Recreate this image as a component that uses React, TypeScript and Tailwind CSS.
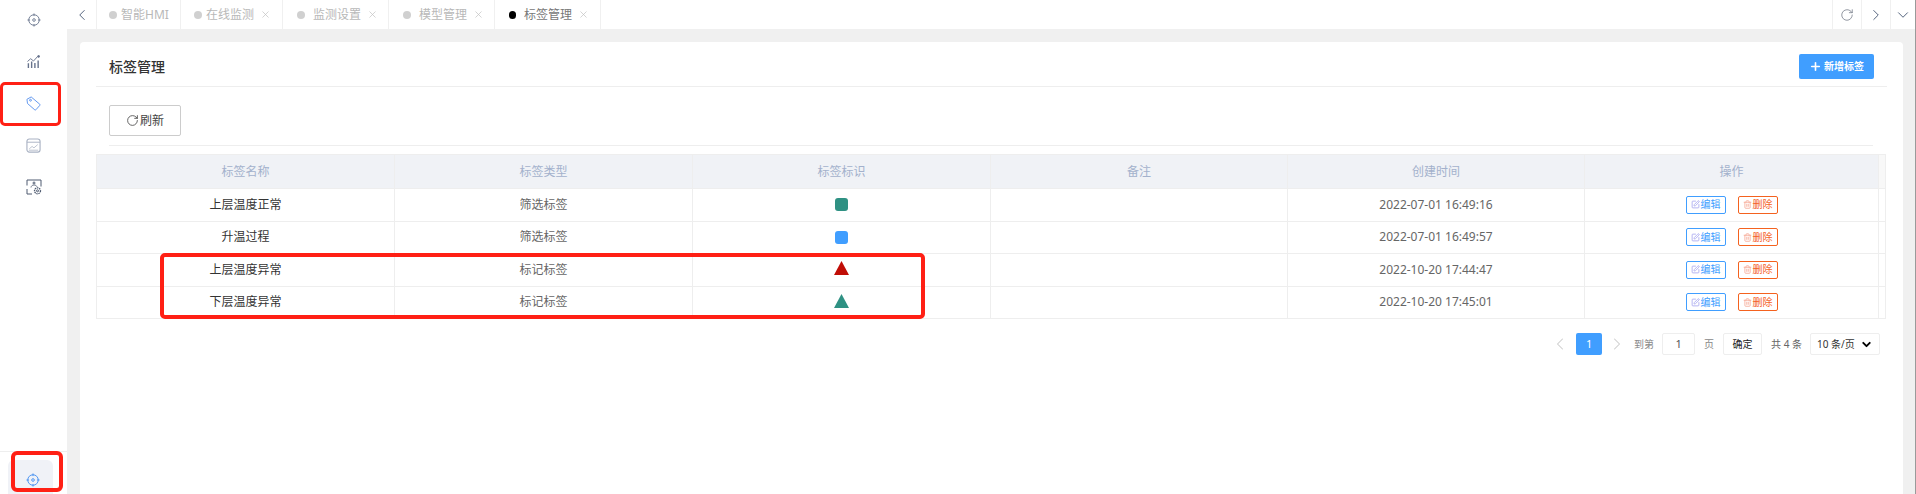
import { ChevronDown, ChevronLeft, ChevronRight, Plus, RotateCw, SquarePen, Trash2, X } from "lucide-react";

type Row = {
  name: string;
  kind: string;
  mark: "square" | "triangle";
  color: string;
  created: string;
};

const rows: Row[] = [
  { name: "上层温度正常", kind: "筛选标签", mark: "square", color: "bg-[#2f9183]", created: "2022-07-01 16:49:16" },
  { name: "升温过程", kind: "筛选标签", mark: "square", color: "bg-[#409eff]", created: "2022-07-01 16:49:57" },
  { name: "上层温度异常", kind: "标记标签", mark: "triangle", color: "#c00d06", created: "2022-10-20 17:44:47" },
  { name: "下层温度异常", kind: "标记标签", mark: "triangle", color: "#2f9183", created: "2022-10-20 17:45:01" },
];

const tabs = [
  { label: "智能HMI", box: "w-[84px] pl-[12px]", dot: "mr-[4px]", closable: false },
  { label: "在线监测", box: "w-[102px] pl-[13px]", dot: "mr-[4px]", closable: true },
  { label: "监测设置", box: "w-[106px] pl-[14px]", dot: "mr-[8px]", closable: true },
  { label: "模型管理", box: "w-[106px] pl-[14px]", dot: "mr-[8px]", closable: true },
];

function TargetIcon({ className }: { className: string }) {
  return (
    <svg viewBox="0 0 16 16" className={className} fill="none" stroke="currentColor" strokeWidth="1">
      <circle cx="8" cy="8" r="6" />
      <circle cx="8" cy="8" r="1.5" />
      <path d="M8 0.500v3M8 12.500v3M0.500 8h3M12.500 8h3" />
    </svg>
  );
}

function ChartIcon() {
  return (
    <svg viewBox="0 0 14 14" className="h-[13px] w-[13px] text-[#67738c]" fill="none" stroke="currentColor" strokeWidth="1">
      <path d="M0.500 7l3.500-3 3 2.500 4.500-5" />
      <circle cx="12.500" cy="1.500" r="1" fill="currentColor" />
      <path d="M1.500 14V9M5 14V7M8.500 14V8.500M12 14V6" strokeWidth="1.500" />
    </svg>
  );
}

function TagIcon() {
  return (
    <svg viewBox="0 0 16 16" className="h-[15px] w-[15px] text-[#5b93ee]" fill="none" stroke="currentColor" strokeWidth="1">
      <path d="M1 3.500L5.500 1l9.200 7.800a.8.8 0 0 1 .1 1.100l-4.300 4.800a.8.8 0 0 1-1.100.1L1.600 8z" />
      <circle cx="4.800" cy="4.500" r="1" />
    </svg>
  );
}

function PanelChartIcon() {
  return (
    <svg viewBox="0 0 16 16" className="h-[15px] w-[15px] text-[#a9b2c3]" fill="none" stroke="currentColor" strokeWidth="1.200">
      <rect x="1" y="1" width="14" height="14" rx="2.500" />
      <path d="M1 4.500h14" strokeWidth="1" />
      <path d="M3.500 11.500l3-2.500 2 1.500 4-3.500M3 13h10" strokeWidth="0.800" />
    </svg>
  );
}

function ScreenGearIcon() {
  return (
    <svg viewBox="0 0 16 16" className="h-[16px] w-[16px] text-[#4f5b70]" fill="none" stroke="currentColor" strokeWidth="1">
      <path d="M1 6.500V1h14v6.500M1 10v5h5" />
      <circle cx="8" cy="4" r="1" />
      <path d="M5 8.500c.2-1.500 1.200-2.500 3-2.500s2.800.8 3 2" strokeWidth="0.800" />
      <circle cx="11.500" cy="11.800" r="3" strokeDasharray="1.500 0.700" strokeWidth="1.300" />
      <circle cx="11.500" cy="11.800" r="1" />
    </svg>
  );
}

function SideItem({ tall = true, children }: { tall?: boolean; children: React.ReactNode }) {
  return <div className={`flex items-center justify-center ${tall ? "h-[42px]" : "h-[40px]"}`}>{children}</div>;
}

function Sidebar() {
  return (
    <aside className="flex w-[67px] shrink-0 flex-col justify-between bg-white">
      <div className="flex flex-col">
        <SideItem tall={false}>
          <TargetIcon className="h-[14px] w-[14px] text-[#67738c]" />
        </SideItem>
        <SideItem>
          <ChartIcon />
        </SideItem>
        <SideItem>
          <TagIcon />
        </SideItem>
        <SideItem>
          <PanelChartIcon />
        </SideItem>
        <SideItem>
          <ScreenGearIcon />
        </SideItem>
      </div>
      <div className="border-t border-[#eeeeee] pl-[8px] pt-[8px]">
        <div className="flex h-[34px] w-[45px] items-center justify-center rounded-t-[6px] bg-[#f0f2f7] pl-[5px] pt-[6px]">
          <TargetIcon className="h-[14px] w-[14px] text-[#3f8cf0]" />
        </div>
      </div>
    </aside>
  );
}

function TabBar() {
  return (
    <div className="flex h-[29px] shrink-0 items-stretch bg-white text-[12px] text-[#b8b8b8]">
      <div className="flex w-[30px] items-center justify-center border-r border-[#f0f0f0]">
        <ChevronLeft className="h-[18px] w-[18px] text-[#4a5a75]" strokeWidth={1.25} />
      </div>
      {tabs.map((tab) => (
        <div key={tab.label} className={`flex items-center whitespace-nowrap border-r border-[#f0f0f0] ${tab.box}`}>
          <span className={`h-[8px] w-[8px] rounded-full bg-[#d0d0d0] ${tab.dot}`} />
          <span>{tab.label}</span>
          {tab.closable && <X className="ml-[6px] h-[11px] w-[11px] text-[#c0c0c0]" strokeWidth={1.5} />}
        </div>
      ))}
      <div className="flex w-[106px] items-center whitespace-nowrap border-r border-[#f0f0f0] pl-[14px]">
        <span className="mr-[8px] h-[8px] w-[7px] rounded-full bg-black" />
        <span className="text-[#777777]">标签管理</span>
        <X className="ml-[6px] h-[11px] w-[11px] text-[#c0c0c0]" strokeWidth={1.5} />
      </div>
      <div className="flex-1" />
      <div className="flex w-[29px] items-center justify-center border-l border-[#f0f0f0]">
        <RotateCw className="h-[14px] w-[14px] text-[#6b7280]" strokeWidth={1.25} />
      </div>
      <div className="flex w-[29px] items-center justify-center border-l border-[#f0f0f0]">
        <ChevronRight className="h-[18px] w-[18px] text-[#4a5a75]" strokeWidth={1.25} />
      </div>
      <div className="flex w-[25px] items-center justify-center border-l border-[#f0f0f0]">
        <ChevronDown className="h-[18px] w-[18px] text-[#4a5a75]" strokeWidth={1.25} />
      </div>
    </div>
  );
}

function Mark({ row }: { row: Row }) {
  if (row.mark === "square") {
    return <span className={`h-[13px] w-[13px] rounded-[3px] ${row.color}`} />;
  }
  return (
    <svg viewBox="0 0 15 14" className="mb-[3px] h-[14px] w-[15px]">
      <polygon points="7.5,0 15,14 0,14" fill={row.color} />
    </svg>
  );
}

function TagTable() {
  const cell = "flex items-center justify-center border-r border-[#eeeeee]";
  return (
    <div className="ml-[16px] mr-[17px] mt-[8px] border border-[#eeeeee] text-[12px]">
      <div className="flex h-[33px] bg-[#f0f2f6] text-[#a3b1cc]">
        <div className={`${cell} w-[298px]`}>标签名称</div>
        <div className={`${cell} w-[298px]`}>标签类型</div>
        <div className={`${cell} w-[298px]`}>标签标识</div>
        <div className={`${cell} w-[297px]`}>备注</div>
        <div className={`${cell} w-[297px]`}>创建时间</div>
        <div className={`${cell} w-[294px]`}>操作</div>
        <div className="flex-1 bg-[#f8f8f8]" />
      </div>
      {rows.map((row) => (
        <div key={row.created} className="flex h-[32.5px] border-t border-[#eeeeee]">
          <div className={`${cell} w-[298px] text-[#333333]`}>{row.name}</div>
          <div className={`${cell} w-[298px] text-[#666666]`}>{row.kind}</div>
          <div className={`${cell} w-[298px]`}>
            <Mark row={row} />
          </div>
          <div className={`${cell} w-[297px]`} />
          <div className={`${cell} w-[297px] text-[#666666]`}>{row.created}</div>
          <div className={`${cell} w-[294px] gap-[12px] text-[10px]`}>
            <button type="button" className="flex h-[18px] w-[40px] items-center justify-center gap-[1px] rounded-[2px] border border-[#409eff] text-[#409eff]">
              <SquarePen className="h-[9px] w-[9px] shrink-0 text-[#a9a9f0]" strokeWidth={2.25} />
              <span>编辑</span>
            </button>
            <button type="button" className="flex h-[18px] w-[40px] items-center justify-center gap-[1px] rounded-[2px] border border-[#f4621f] text-[#f4621f]">
              <Trash2 className="h-[9px] w-[9px] shrink-0 text-[#f7ab98]" strokeWidth={2.25} />
              <span>删除</span>
            </button>
          </div>
          <div className="flex-1" />
        </div>
      ))}
    </div>
  );
}

function Pagination() {
  return (
    <div className="mr-[23px] mt-[14px] flex h-[22px] items-center justify-end whitespace-nowrap text-[10px] text-[#888888]">
      <ChevronLeft className="h-[20px] w-[20px] text-[#cccccc]" strokeWidth={1.25} />
      <span className="ml-[6px] flex h-[22px] w-[26px] items-center justify-center rounded-[2px] bg-[#409eff] text-[11px] text-white">1</span>
      <ChevronRight className="ml-[5px] h-[20px] w-[20px] text-[#cccccc]" strokeWidth={1.25} />
      <span className="ml-[7px]">到第</span>
      <span className="ml-[8px] flex h-[22px] w-[33px] items-center justify-center rounded-[2px] border border-[#eeeeee] text-[11px] text-[#555555]">1</span>
      <span className="ml-[9px]">页</span>
      <span className="ml-[9px] flex h-[22px] w-[39px] items-center justify-center rounded-[2px] border border-[#eeeeee] text-[#222222]">确定</span>
      <span className="ml-[9px] text-[#666666]">共 4 条</span>
      <span className="ml-[8px] flex h-[22px] w-[70px] items-center justify-between rounded-[2px] border border-[#eeeeee] pl-[6px] pr-[6px] text-[#333333]">
        10 条/页
        <ChevronDown className="h-[13px] w-[13px] text-black" strokeWidth={3.5} />
      </span>
    </div>
  );
}

export default function App() {
  return (
    <div
      className="relative flex h-[494px] w-[1916px] overflow-hidden bg-[#f0f0f0]"
      style={{ fontFamily: '"Noto Sans", "Noto Sans CJK SC", sans-serif' }}
    >
      <Sidebar />
      <div className="flex min-w-0 flex-1 flex-col border-r border-r-[#9a9a9a]">
        <TabBar />
        <div className="flex-1 pl-[13px] pr-[12px] pt-[13px]">
          <div className="h-full rounded-t-[4px] bg-white">
            <div className="mx-[16px] flex h-[45px] items-center justify-between border-b border-[#eeeeee] pl-[13px] pr-[13px] pt-[5px]">
              <h1 className="text-[14px] font-medium text-[#333333]">标签管理</h1>
              <button type="button" className="flex h-[25px] w-[75px] items-center justify-center gap-[2px] rounded-[2px] bg-[#409eff] text-[10px] font-bold text-white">
                <Plus className="h-[13px] w-[13px]" strokeWidth={3} />
                新增标签
              </button>
            </div>
            <div className="ml-[29px] mr-[30px] border-b border-[#eeeeee] pb-[9px] pt-[18px]">
              <button type="button" className="flex h-[31px] w-[72px] items-center justify-center gap-[1px] rounded-[2px] border border-[#cccccc] text-[12px] text-[#444444]">
                <RotateCw className="h-[13px] w-[13px]" strokeWidth={1.5} />
                刷新
              </button>
            </div>
            <TagTable />
            <Pagination />
          </div>
        </div>
      </div>

      {/* red annotation boxes drawn over the screenshot */}
      <div className="absolute left-0 top-[82px] h-[44px] w-[61px] rounded-[5px] border-[3px] border-[#ff2015]" />
      <div className="absolute left-[11px] top-[451px] h-[41px] w-[52px] rounded-[6px] border-[4px] border-[#ff2015]" />
      <div className="absolute left-[160px] top-[253px] h-[66px] w-[765px] rounded-[5px] border-[4px] border-[#ff2015]" />
    </div>
  );
}
